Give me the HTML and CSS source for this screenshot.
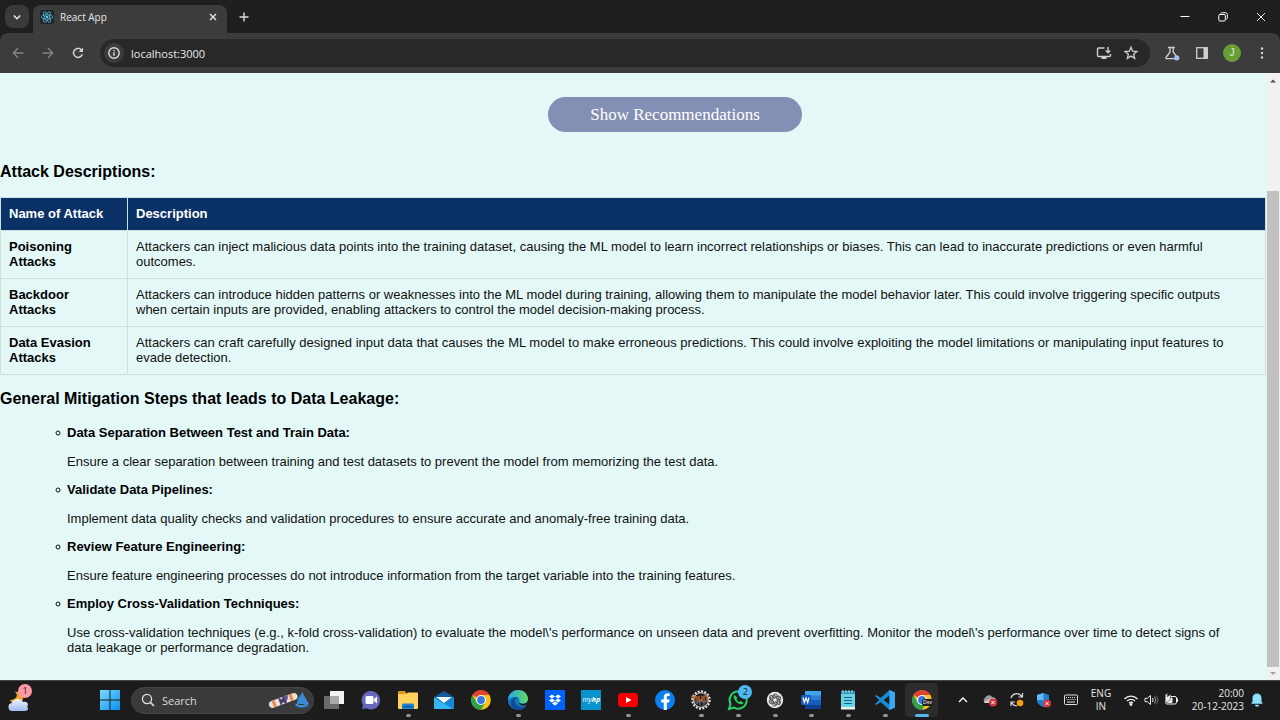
FILE: index.html
```html
<!DOCTYPE html>
<html lang="en">
<head>
<meta charset="utf-8">
<title>React App</title>
<link rel="stylesheet" href="styles.css">
</head>
<body>
<header class="tabstrip">
  <button class="tab-search" aria-label="Search tabs"><svg viewBox="0 0 24 24" width="24" height="24"><path d="M8.800 10.500l3.200 3.200 3.200-3.200" fill="none" stroke="#e8e8e8" stroke-width="1.600"/></svg></button>
  <div class="tab">
    <svg class="favicon" viewBox="0 0 14 14" width="14" height="14"><rect width="14" height="14" rx="2" fill="#20262c"/><g fill="none" stroke="#4fb4cc" stroke-width=".8"><ellipse cx="7" cy="7" rx="5.800" ry="2.300"/><ellipse cx="7" cy="7" rx="5.800" ry="2.300" transform="rotate(60 7 7)"/><ellipse cx="7" cy="7" rx="5.800" ry="2.300" transform="rotate(120 7 7)"/></g><circle cx="7" cy="7" r="1.200" fill="#5fd3ee"/></svg>
    <span class="tab-title">React App</span>
    <button class="icon-btn tab-close" aria-label="Close tab"><svg viewBox="0 0 12 12" width="12" height="12"><path d="M3 3l6 6M9 3l-6 6" stroke="#e8e8e8" stroke-width="1.400"/></svg></button>
  </div>
  <button class="icon-btn new-tab" aria-label="New tab"><svg viewBox="0 0 14 14" width="14" height="14"><path d="M7 2.500v9M2.500 7h9" stroke="#dcdcdc" stroke-width="1.400"/></svg></button>
  <div class="window-controls">
    <button class="icon-btn" aria-label="Minimize"><svg viewBox="0 0 14 14" width="14" height="14"><path d="M2.500 6.500h9" stroke="#fff"/></svg></button>
    <button class="icon-btn" aria-label="Restore"><svg viewBox="0 0 14 14" width="14" height="14" fill="none" stroke="#fff"><rect x="2.800" y="4.500" width="6.500" height="6.500" rx="1.200"/><path d="M4.800 4.200c0-1 .5-1.500 1.500-1.500h3c1.200 0 2 .8 2 2v3c0 1-.5 1.500-1.500 1.500"/></svg></button>
    <button class="icon-btn" aria-label="Close"><svg viewBox="0 0 14 14" width="14" height="14"><path d="M3 3l8 8M11 3l-8 8" stroke="#eee"/></svg></button>
  </div>
</header>
<nav class="toolbar" aria-label="Navigation">
  <div class="nav-buttons">
    <button class="icon-btn" aria-label="Back"><svg viewBox="0 0 14 14" width="14" height="14" fill="none" stroke="#848484" stroke-width="1.400"><path d="M12.500 7h-10M7 2.300L2.300 7 7 11.700"/></svg></button>
    <button class="icon-btn" aria-label="Forward"><svg viewBox="0 0 14 14" width="14" height="14" fill="none" stroke="#848484" stroke-width="1.400"><path d="M1.500 7h10M7 2.300L11.700 7 7 11.700"/></svg></button>
    <button class="icon-btn" aria-label="Reload"><svg viewBox="0 0 14 14" width="14" height="14" fill="none" stroke="#d4d4d4" stroke-width="1.500"><path d="M11.300 8.200A4.500 4.500 0 1 1 10.200 3.700L11.500 5"/><path d="M12 1.500v4.400H7.700z" fill="#d4d4d4" stroke="none"/></svg></button>
  </div>
  <div class="omnibox">
    <button class="site-info" aria-label="Site information"><svg viewBox="0 0 14 14" width="14" height="14"><circle cx="7" cy="7" r="5.200" fill="none" stroke="#ddd" stroke-width="1.400"/><path d="M7 6.300v3.500M7 4v1.200" stroke="#ddd" stroke-width="1.400"/></svg></button>
    <input class="address" type="text" value="localhost:3000" aria-label="Address">
    <button class="icon-btn" aria-label="Install app"><svg viewBox="0 0 16 16" width="16" height="16" fill="none" stroke="#cfcfcf" stroke-width="1.400"><path d="M8.500 3H2.500a1 1 0 0 0-1 1v6.500a1 1 0 0 0 1 1h11a1 1 0 0 0 1-1V9"/><path d="M12 2v5.500M9.700 5.500L12 7.800l2.300-2.300"/><path d="M5.500 13h5" stroke-width="2"/></svg></button>
    <button class="icon-btn" aria-label="Bookmark"><svg viewBox="0 0 16 16" width="16" height="16"><path d="M8 2.200l1.600 4 4.300.3-3.300 2.700 1.100 4.200L8 11.100l-3.700 2.300 1.100-4.200L2.100 6.500l4.300-.3z" fill="none" stroke="#cfcfcf" stroke-width="1.300"/></svg></button>
  </div>
  <div class="actions">
    <button class="icon-btn" aria-label="Experiments"><svg viewBox="0 0 16 16" width="16" height="16" fill="none" stroke="#cfcfcf" stroke-width="1.300"><path d="M4 2.500h7M6 2.500V7L2 12.500c-.5.700 0 1.200.8 1.200h9.500M9.200 2.500V7l3 4"/><circle cx="12.800" cy="12.800" r="2.600" fill="#a2bdf8" stroke="none"/></svg></button>
    <button class="icon-btn" aria-label="Side panel"><svg viewBox="0 0 14 14" width="14" height="14"><rect x="1.700" y="1.700" width="10.600" height="10.600" fill="none" stroke="#cfcfcf" stroke-width="1.300"/><path d="M8.500 1.500h4v11h-4z" fill="#cfcfcf"/></svg></button>
    <button class="avatar" aria-label="Profile">J</button>
    <button class="icon-btn" aria-label="Menu"><svg viewBox="0 0 14 14" width="14" height="14" fill="#d4d4d4"><circle cx="7" cy="2.500" r="1.200"/><circle cx="7" cy="7" r="1.200"/><circle cx="7" cy="11.500" r="1.200"/></svg></button>
  </div>
</nav>
<div class="viewport">
  <main class="page">
    <div class="cta"><button class="show-btn">Show Recommendations</button></div>
    <h3 class="heading">Attack Descriptions:</h3>
    <table class="attacks">
      <thead><tr><th class="name-col">Name of Attack</th><th>Description</th></tr></thead>
      <tbody>
        <tr><th scope="row">Poisoning Attacks</th><td>Attackers can inject malicious data points into the training dataset, causing the ML model to learn incorrect relationships or biases. This can lead to inaccurate predictions or even harmful outcomes.</td></tr>
        <tr><th scope="row">Backdoor Attacks</th><td>Attackers can introduce hidden patterns or weaknesses into the ML model during training, allowing them to manipulate the model behavior later. This could involve triggering specific outputs when certain inputs are provided, enabling attackers to control the model decision-making process.</td></tr>
        <tr><th scope="row">Data Evasion Attacks</th><td>Attackers can craft carefully designed input data that causes the ML model to make erroneous predictions. This could involve exploiting the model limitations or manipulating input features to evade detection.</td></tr>
      </tbody>
    </table>
    <h3 class="heading">General Mitigation Steps that leads to Data Leakage:</h3>
    <ul class="steps">
      <li><strong>Data Separation Between Test and Train Data:</strong><p>Ensure a clear separation between training and test datasets to prevent the model from memorizing the test data.</p></li>
      <li><strong>Validate Data Pipelines:</strong><p>Implement data quality checks and validation procedures to ensure accurate and anomaly-free training data.</p></li>
      <li><strong>Review Feature Engineering:</strong><p>Ensure feature engineering processes do not introduce information from the target variable into the training features.</p></li>
      <li><strong>Employ Cross-Validation Techniques:</strong><p>Use cross-validation techniques (e.g., k-fold cross-validation) to evaluate the model\'s performance on unseen data and prevent overfitting. Monitor the model\'s performance over time to detect signs of data leakage or performance degradation.</p></li>
    </ul>
  </main>
  <div class="scrollbar" aria-hidden="true">
    <svg viewBox="0 0 14 14" width="14" height="14"><path d="M4 9.500L7 6.500l3 3z" fill="#505050"/></svg>
    <div class="track"><div class="thumb"></div></div>
    <svg viewBox="0 0 14 13" width="14" height="13"><path d="M4 5l3 3 3-3z" fill="#a3a3a3"/></svg>
  </div>
</div>
<footer class="taskbar">
  <button class="weather" aria-label="Weather"><svg viewBox="0 0 26 28" width="26" height="28"><defs><linearGradient id="cloud" x2="0" y2="1"><stop stop-color="#edf3ff"/><stop offset="1" stop-color="#9fbaf0"/></linearGradient></defs><path d="M8 6c4 3 1 8-5 8 1 5 12 5 13-1 1-5-4-8-8-7z" fill="#f3a52f"/><path d="M6 25a4 4 0 0 1-1-8c1-5 9-5 11-1 5-1 6 3 4 5 2 1 1 4-2 4z" fill="url(#cloud)"/></svg><span class="badge">1</span></button>
  <button class="start" aria-label="Start"><svg viewBox="0 0 20 20" width="20" height="20"><defs><linearGradient id="win" x2="1" y2="1"><stop stop-color="#79dcff"/><stop offset="1" stop-color="#0b8df2"/></linearGradient></defs><path d="M0 0h9.500v9.500H0zM10.500 0H20v9.500h-9.500zM0 10.500h9.500V20H0zM10.500 10.500H20V20h-9.500z" fill="url(#win)"/></svg></button>
  <label class="search">
    <svg viewBox="0 0 14 14" width="14" height="14"><circle cx="6" cy="6" r="4.600" fill="#444" stroke="#e4e4e4" stroke-width="1.200"/><path d="M9.400 9.400l3.600 3.600" stroke="#e4e4e4" stroke-width="1.500"/></svg>
    <input type="text" placeholder="Search" aria-label="Search">
    <svg viewBox="0 0 42 20" width="42" height="20"><g transform="rotate(-20 15 10)"><rect x="0" y="7" width="30" height="7" rx="3.500" fill="#eedfd8"/><path d="M4 7h3v7H4zM22 7h3v7h-3z" fill="#e28a55"/><path d="M11 6l3 3 3-4 2 5-2 5-3-3-3 3z" fill="#4b3c74"/><path d="M17 6l4 1-1 4-3-1z" fill="#6b5591"/></g><path d="M29 14c0-5 3-9 6-12 0 4 4 6 5 12z" fill="#3989d6"/><path d="M27 13c4 3 9 3 14-1v4c-4 3-10 3-14 0z" fill="#2464a8"/><path d="M28 14c4 3 8 3 12-1" stroke="#75bdf0" fill="none"/></svg>
  </label>
  <div class="apps">
    <button class="app" aria-label="Task view"><svg viewBox="0 0 22 22" width="22" height="22"><path d="M7 2h14v13H7z" fill="#f1f1f1"/><path d="M1 7h15v13H1z" fill="#8b8b8b" opacity=".7"/></svg></button>
    <button class="app" aria-label="Chat"><svg viewBox="0 0 22 22" width="22" height="22"><path d="M11 2a9.200 9.200 0 1 1-4.500 17.300L2 20l1-4A9.200 9.200 0 0 1 11 2z" fill="#6867bd"/><rect x="5.500" y="7" width="8" height="8" rx="1.500" fill="#fff"/><path d="M14 10l3-2.500v7L14 12z" fill="#fff"/></svg></button>
    <button class="app open" aria-label="File Explorer"><svg viewBox="0 0 22 22" width="22" height="22"><path d="M1 3q0-1 1-1h6l2 3H1z" fill="#d99a1e"/><path d="M1 5h8l2-1.500h9q1 0 1 1V19q0 1-1 1H2q-1 0-1-1z" fill="#ffd35b"/><path d="M5 20v-4q0-1.500 1.500-1.500h9Q17 14.500 17 16v4z" fill="#1b7fcf"/><path d="M7 17.500h8" stroke="#0b4f94"/></svg></button>
    <button class="app" aria-label="Mail"><svg viewBox="0 0 22 22" width="22" height="22"><path d="M1 8l10-6 10 6-10 7z" fill="#0f5b9e"/><path d="M3 8h16l-8 6z" fill="#f2faff"/><path d="M1 8l10 6.500L21 8v11q0 1-1 1H2q-1 0-1-1z" fill="#35b5f1"/><path d="M11 14.500L21 8v11q0 1-1 1z" fill="#1689d6"/><path d="M4 8h14l-7 5.500z" fill="#f2faff"/></svg></button>
    <button class="app" aria-label="Chrome"><svg viewBox="0 0 22 22" width="22" height="22"><circle cx="11" cy="11" r="9.800" fill="#fbc116"/><path d="M11 11L2.500 6.100A9.800 9.800 0 0 1 19.500 6.100H11z" fill="#e34133"/><path d="M2.500 6.100A9.800 9.800 0 0 0 11 20.800L15.300 13.400 11 11 6.700 13.400z" fill="#2da24d"/><circle cx="11" cy="11" r="5" fill="#fff"/><circle cx="11" cy="11" r="3.900" fill="#3977e4"/></svg></button>
    <button class="app open" aria-label="Edge"><svg viewBox="0 0 22 22" width="22" height="22"><defs><linearGradient id="edge"><stop stop-color="#24a6eb"/><stop offset="1" stop-color="#63db63"/></linearGradient></defs><circle cx="11" cy="11" r="10" fill="#1478c7"/><path d="M1 11C1 4 7 1 11 1c7 0 10 5 10 9 0 5-7 6-9 3 1-1 1-5-4-5-4 0-7 2-7 3z" fill="url(#edge)"/><path d="M11 8c-6 3-2 11 5 10 2 0 3-1 4-2-3 6-10 6-14 3-5-5-1-12 5-11z" fill="#104c91"/><path d="M12 13c2 3 9 2 9-2 0 2 0 4-1 5-4 2-8 0-8-3z" fill="#1c1c1c"/></svg></button>
    <button class="app" aria-label="Dropbox"><svg viewBox="0 0 22 22" width="22" height="22"><path d="M1 1h20v20H1z" fill="#0062ff"/><path d="M8 5.500l3 2-3 2-3-2zM14 5.500l3 2-3 2-3-2zM8 9.500l3 2-3 2-3-2zM14 9.500l3 2-3 2-3-2zM11 12.500l3 2-3 2-3-2z" fill="#fff"/></svg></button>
    <button class="app" aria-label="myHP"><span class="myhp">my<b>hp</b></span></button>
    <button class="app open" aria-label="YouTube"><svg viewBox="0 0 22 22" width="22" height="22"><rect x="1" y="4" width="20" height="14" rx="3" fill="#f60000"/><path d="M9 8l5.500 3L9 14z" fill="#fff"/></svg></button>
    <button class="app" aria-label="Facebook"><svg viewBox="0 0 22 22" width="22" height="22"><circle cx="11" cy="11" r="10" fill="#0c80f0"/><path d="M9.800 21v-7.500H7.200v-3h2.600V8.300c0-2.600 1.500-4 4-4l1.800.2V7h-1.300c-1.200 0-1.500.6-1.500 1.500v2h2.800l-.5 3h-2.300V21z" fill="#fff"/></svg></button>
    <button class="app open" aria-label="Built tool"><svg viewBox="0 0 22 22" width="22" height="22"><circle cx="11" cy="11" r="8.700" fill="none" stroke="#e6e6e6" stroke-width="2" stroke-dasharray="2 1.400"/><circle cx="11" cy="11" r="7.300" fill="#28201f" stroke="#ddd"/><path d="M2 10V7h3v3M4 12h14M7 11V7M9 7v4h3V7M14 11V7h5M17 7v4" fill="none" stroke="#c87135" stroke-width="1.200"/><path d="M7 15v-2h3v3M12 13h4M14 13v4" fill="none" stroke="#6e7fa6"/></svg></button>
    <button class="app open" aria-label="WhatsApp"><svg viewBox="0 0 22 22" width="22" height="22"><path d="M2 20l1.500-5A8.600 8.600 0 1 1 7 18.600z" fill="none" stroke="#25d366" stroke-width="2"/><path d="M7.500 6c-2 2 0 5 2 7s5 3.500 7 1l-2.700-2-1.400 1c-1.400-.7-2.300-1.700-3-3l1-1.300z" fill="#25d366"/></svg><span class="badge blue">2</span></button>
    <button class="app open" aria-label="ChatGPT"><svg viewBox="0 0 22 22" width="22" height="22"><circle cx="11" cy="11" r="8.200" fill="#e9e9e9"/><g fill="none" stroke="#444" stroke-width=".9"><path id="petal" d="M9 11V7.200a2.500 2.500 0 0 1 4.700-1M9 8.800l3.500-2 3.200 1.900"/><use href="#petal" transform="rotate(60 11 11)"/><use href="#petal" transform="rotate(120 11 11)"/><use href="#petal" transform="rotate(180 11 11)"/><use href="#petal" transform="rotate(240 11 11)"/><use href="#petal" transform="rotate(300 11 11)"/></g></svg></button>
    <button class="app open" aria-label="Word"><svg viewBox="0 0 22 22" width="22" height="22"><rect x="5" y="2" width="16" height="18" rx="1" fill="#2b7cd3"/><path d="M5 2h16v4.500H5z" fill="#41a5ee"/><path d="M5 15.500h16V20H5z" fill="#103f91"/><path d="M5 11h16v4.500H5z" fill="#185abd"/><rect x="1" y="6" width="10" height="10" rx="1" fill="#185abd"/><path d="M3 8.500l1.300 5L6 9l1.700 4.500 1.300-5" fill="none" stroke="#fff" stroke-width="1.200"/></svg></button>
    <button class="app open" aria-label="Notepad"><svg viewBox="0 0 22 22" width="22" height="22"><path d="M4 3h14v17H4z" fill="#65d3e8"/><path d="M4 18h14v2.500H4z" fill="#f1eee9"/><path d="M4 2h14v3H4z" fill="#2f91b4"/><path d="M6 1v3M9 1v3M12 1v3M15 1v3" stroke="#b3e9f5"/><path d="M7 8.500h8M7 11.500h8M7 14.500h8" stroke="#146078"/></svg></button>
    <button class="app open" aria-label="Visual Studio Code"><svg viewBox="0 0 22 22" width="22" height="22"><path d="M15.500 1L21 3.500v15L15.500 21 6.500 13l-4 3L1 15l4.200-4L1 7l1.500-1 4 3zM15.500 6.500L9.700 11l5.800 4.500z" fill="#168cd2" fill-rule="evenodd"/><path d="M15.500 1L21 3.500v15L15.500 21z" fill="#38a9ed"/></svg></button>
    <button class="app open active" aria-label="Chrome Dev"><svg viewBox="0 0 22 22" width="22" height="22"><circle cx="11" cy="11" r="9.800" fill="#fbc116"/><path d="M11 11L2.500 6.100A9.800 9.800 0 0 1 19.500 6.100H11z" fill="#e34133"/><path d="M2.500 6.100A9.800 9.800 0 0 0 11 20.800L15.300 13.400 11 11 6.700 13.400z" fill="#2da24d"/><circle cx="11" cy="11" r="5" fill="#fff"/><circle cx="11" cy="11" r="3.900" fill="#3977e4"/></svg><span class="dev">Dev</span></button>
  </div>
  <div class="tray">
    <button class="tray-icon" aria-label="Show hidden icons"><svg viewBox="0 0 16 16" width="16" height="16"><path d="M4 10l4-4 4 4" fill="none" stroke="#fff" stroke-width="1.300"/></svg></button>
    <button class="tray-icon" aria-label="OneDrive"><svg viewBox="0 0 16 16" width="16" height="16"><path d="M3 11a3 3 0 0 1 0-5c1-3 6-4 7-1 3 0 5 2 4 5z" fill="#9e9e9e"/><path d="M2 10l8-4c3 0 5 2 4 4l-2 1H3z" fill="#d1d1d1"/><circle cx="11" cy="10.500" r="4" fill="#d23541"/><path d="M9.500 9l3 3M12.500 9l-3 3" stroke="#fff"/></svg></button>
    <button class="tray-icon" aria-label="Updates"><svg viewBox="0 0 16 16" width="16" height="16"><path d="M2 6a6 6 0 0 1 10-2.500l1 1M13.500 1v4H9.500M8 14a6 6 0 0 1-5-3l-1-1M2 14v-4h4" fill="none" stroke="#ddd" stroke-width="1.200"/><circle cx="11" cy="11" r="3.300" fill="#f99c13"/></svg></button>
    <button class="tray-icon" aria-label="Security"><svg viewBox="0 0 16 16" width="16" height="16"><path d="M7.500 1L13 3v5c0 4-3 6-5.500 7C5 14 1 12 1 8V3z" fill="#1683d8"/><path d="M7.500 1v7H1V3zM7.500 8H13c0 4-3 6-5.500 7z" fill="#65b9ed"/><circle cx="11" cy="11.500" r="4" fill="#d23541"/><path d="M9.500 10l3 3M12.500 10l-3 3" stroke="#fff"/></svg></button>
    <button class="tray-icon" aria-label="Keyboard"><svg viewBox="0 0 16 16" width="16" height="16" fill="none" stroke="#ddd"><rect x="1.500" y="3" width="13" height="9.500" rx="1"/><path d="M3 5.500h10M3.500 7.500h9.500" stroke-dasharray="1 1"/><path d="M4 10h8"/></svg></button>
    <button class="lang">ENG<br>IN</button>
    <button class="status" aria-label="Network, volume and battery">
      <svg viewBox="0 0 16 16" width="16" height="16" fill="none" stroke="#eee" stroke-width="1.300"><path d="M1.500 7a9 9 0 0 1 13 0M4 9a5.700 5.700 0 0 1 8 0M6 11a3 3 0 0 1 4 0"/><circle cx="8" cy="12.500" r=".8" fill="#eee"/></svg>
      <svg viewBox="0 0 16 16" width="16" height="16" fill="none" stroke="#eee"><path d="M2 6.300h2.300L7.500 3.500v9L4.300 9.700H2zM9.500 6q1.300 2 0 4"/><path d="M11.500 4.500q2.500 3.500 0 7" stroke="#999"/><path d="M13.500 3.500q3 4.500 0 9" stroke="#666"/></svg>
      <svg viewBox="0 0 16 16" width="16" height="16"><rect x="2.500" y="4.500" width="11" height="7.500" rx="1.500" fill="none" stroke="#eee"/><path d="M14.500 6.500v3.500M4 6h5v4.500H4z" stroke="#eee" fill="#eee"/><path d="M2 3l3-2-1 4 4-3-1 6-4 3z" fill="#eee" stroke="#1c1c1c" stroke-width=".5"/></svg>
    </button>
    <time class="clock" datetime="2023-12-20T20:00">20:00<br>20-12-2023</time>
    <button class="bell" aria-label="Notifications"><svg viewBox="0 0 16 16" width="16" height="16" fill="#8fe0fb"><path d="M8 1.500a4.500 4.500 0 0 1 4.500 4.500v3.500l1.300 2.300H2.200l1.300-2.300V6A4.500 4.500 0 0 1 8 1.500zM6 12.800h4a2 2 0 0 1-4 0z"/></svg></button>
  </div>
</footer>
</body>
</html>
```
FILE: styles.css
```css
* { box-sizing: border-box; }
body {
  margin: 0;
  height: 100vh;
  display: flex;
  flex-direction: column;
  overflow: hidden;
  background: #1f1f1f;
  color: #e8e8e8;
  font-family: "Open Sans", "Noto Sans", sans-serif;
  font-size: 11px;
}
button, input { font: inherit; color: inherit; border: 0; background: none; padding: 0; margin: 0; }
input { outline: 0; min-width: 0; }
svg { display: block; flex: none; }
.icon-btn { display: flex; align-items: center; justify-content: center; width: 30px; height: 28px; flex: none; }

.tabstrip { display: flex; align-items: flex-end; height: 33px; padding-left: 5px; background: #1f1f1f; flex: none; }
.tab-search { width: 24px; height: 23px; margin-bottom: 5px; border-radius: 8px; background: #3a3a3a; }
.tab {
  display: flex;
  align-items: center;
  width: 194px;
  height: 28px;
  margin-left: 4px;
  padding: 0 4px 4px 7px;
  background: #3c3c3c;
  border-radius: 8px 8px 0 0;
}
.tab-title { flex: 1; padding-left: 6px; font-size: 10px; }
.tab-close { width: 20px; }
.new-tab { margin: 0 0 2px 2px; }
.window-controls { display: flex; align-self: flex-start; margin-left: auto; padding-top: 3px; }
.window-controls .icon-btn { width: 38px; }

.toolbar {
  display: flex;
  align-items: center;
  height: 40px;
  padding: 0 3px;
  background: #3c3c3c;
  border-radius: 8px 8px 0 0;
  flex: none;
}
.nav-buttons { display: flex; padding-right: 7px; }
.omnibox {
  display: flex;
  align-items: center;
  flex: 1;
  height: 28px;
  padding: 0 6px 0 4px;
  border-radius: 14px;
  background: #282828;
}
.omnibox .icon-btn { width: 27px; }
.site-info { display: flex; align-items: center; justify-content: center; width: 20px; height: 20px; border-radius: 10px; background: #3c3c3c; }
.address { flex: 1; padding-left: 7px; font-size: 11px; }
.actions { display: flex; align-items: center; padding-left: 7px; }
.avatar { width: 18px; height: 18px; margin: 0 6px; border-radius: 9px; background: #66a035; font-family: "Liberation Sans", sans-serif; font-size: 10px; line-height: 18px; }

.viewport {
  display: flex;
  flex: 1;
  min-height: 0;
  background: #e3f8f7;
  color: #111;
  font-family: "Liberation Sans", Arial, sans-serif;
  font-size: 13px;
  line-height: 15px;
}
.page { flex: 1; min-width: 0; overflow: hidden; padding-top: 24px; }
.cta { display: flex; justify-content: center; padding-left: 84px; }
.show-btn {
  width: 254px;
  height: 35px;
  border-radius: 18px;
  background: #838fb4;
  color: #fff;
  font-family: "Liberation Serif", "Times New Roman", serif;
  font-size: 17px;
}
.heading { margin: 0; color: #000; font-size: 16px; line-height: 18px; }
.cta + .heading { margin: 31px 0 16px; }
.attacks { width: 100%; border-collapse: collapse; }
.attacks th, .attacks td { padding: 8px 8px 9px; border: 1px solid #cfdfdf; text-align: left; vertical-align: top; }
.attacks td { padding-right: 16px; }
.attacks tbody th { color: #000; }
.attacks thead th { background: #0b3266; color: #fff; }
.name-col { width: 127px; }
.attacks + .heading { margin: 15px 0 17px; }
.steps { margin: 0; padding: 0 24px 0 71px; list-style: circle; }
.steps strong { display: block; margin-left: -4px; color: #000; }
.steps p { margin: 14px 0 13px -4px; }

.scrollbar { display: flex; flex-direction: column; width: 14px; background: #f1f1f1; flex: none; }
.track { flex: 1; display: flex; flex-direction: column; justify-content: flex-end; padding: 0 1px; }
.thumb { height: 82%; background: #c1c1c1; }

.taskbar { display: flex; align-items: center; height: 40px; padding: 0 15px 1px 7px; background: #1c1c1c; border-top: 1px solid #434747; flex: none; }
.weather { position: relative; width: 26px; height: 28px; }
.badge {
  position: absolute;
  top: -2px;
  right: 1px;
  width: 14px;
  height: 14px;
  border-radius: 7px;
  background: #ff99a4;
  color: #222;
  font-size: 9px;
  line-height: 14px;
  text-align: center;
}
.start { margin-left: 67px; }
.search {
  display: flex;
  align-items: center;
  width: 183px;
  height: 27px;
  margin-left: 11px;
  padding: 0 3px 0 9px;
  border: 1px solid #464646;
  border-radius: 14px;
  background: #3a3a3a;
}
.search input { flex: 1; padding-left: 7px; font-size: 11px; }
.search input::placeholder { color: #dcdcdc; opacity: 1; }
.apps { display: flex; width: 624px; margin-left: 2px; }
.app { position: relative; flex: 1; height: 34px; margin: 0 2px; display: flex; justify-content: center; align-items: center; border-radius: 4px; }
.open::after { content: ""; position: absolute; bottom: 0; left: 50%; width: 5px; height: 3px; margin-left: -2px; border-radius: 2px; background: #929292; }
.active { background: #2c2c2c; }
.active::after { width: 14px; margin-left: -7px; background: #52b7ef; }
.badge.blue { top: 2px; right: 2px; background: #4cb9f0; }
.myhp { width: 20px; height: 20px; background: #0a93cb; color: #fff; font-size: 7px; line-height: 19px; font-style: italic; text-align: center; }
.dev { position: absolute; bottom: 11px; right: 5px; padding: 0 1px; border-radius: 2px; background: #222; color: #fff; font-size: 5px; line-height: 7px; }
.tray { display: flex; align-items: center; margin-left: auto; }
.tray-icon { display: flex; justify-content: center; width: 27px; }
.lang { width: 34px; font-size: 10px; line-height: 13px; }
.status { display: flex; gap: 4px; padding: 0 5px; }
.clock { width: 60px; font-size: 10px; line-height: 13px; text-align: right; }
.bell { margin-left: 5px; }
```
